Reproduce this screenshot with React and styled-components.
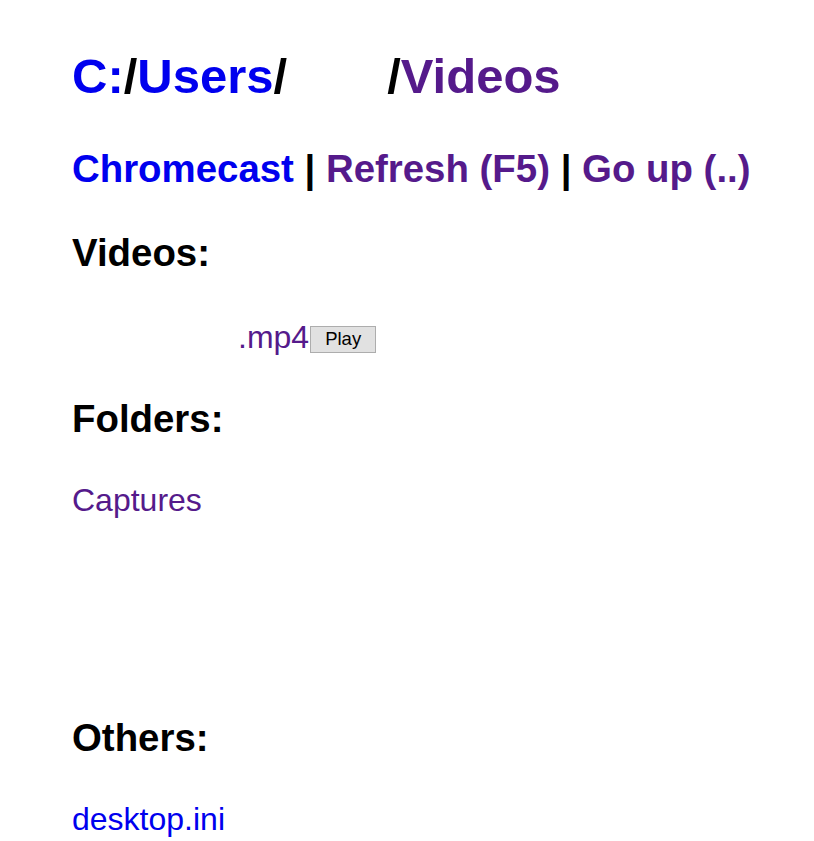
import styled, { createGlobalStyle } from "styled-components";

const GlobalStyle = createGlobalStyle`
  html, body {
    margin: 0;
    padding: 0;
    background: #ffffff;
  }
  body {
    font-family: "Liberation Sans", Arial, sans-serif;
    color: #000000;
  }
`;

const LINK = "#0000ee";
const VISITED = "#551a8b";

const Page = styled.main`
  display: flex;
  flex-direction: column;
  padding: 49px 0 0 72px;
  font-size: 32px;
  line-height: 36px;
`;

const Title = styled.h1`
  margin: 0;
  font-size: 49px;
  line-height: 54px;
  font-weight: bold;
  white-space: nowrap;
`;

const Nav = styled.h2`
  margin: ${(p) => p.$top}px 0 0;
  font-size: 38.4px;
  line-height: 43px;
  font-weight: bold;
  white-space: nowrap;
`;

const Heading = styled.h2`
  margin: ${(p) => p.$top}px 0 0;
  font-size: 38.4px;
  line-height: 43px;
  font-weight: bold;
`;

const Link = styled.a`
  color: ${(p) => (p.$visited ? VISITED : LINK)};
  text-decoration: none;
  cursor: pointer;
`;

const Redacted = styled.span`
  display: inline-block;
  width: ${(p) => p.$w}px;
`;

const Row = styled.div`
  margin: ${(p) => p.$top}px 0 0;
  white-space: nowrap;
`;

const PlayButton = styled.button`
  margin-left: 1px;
  height: 27px;
  padding: 0 14px;
  font-family: "Liberation Sans", Arial, sans-serif;
  font-size: 18.5px;
  line-height: 20px;
  color: #000000;
  background: #e1e1e1;
  border: 1px solid #adadad;
  border-radius: 0;
  vertical-align: baseline;
  position: relative;
  top: -3px;
`;

const videos = [{ name: 166, ext: ".mp4" }];
const folders = [{ label: "Captures", visited: true }];
const others = [{ label: "desktop.ini", visited: false }];

export default function App() {
  return (
    <>
      <GlobalStyle />
      <Page>
        <Title>
          <Link>C:</Link>/<Link>Users</Link>/<Redacted $w={100} />/
          <Link $visited>Videos</Link>
        </Title>
        <Nav $top={44}>
          <Link>Chromecast</Link> | <Link $visited>Refresh (F5)</Link> |{" "}
          <Link $visited>Go up (..)</Link>
        </Nav>

        <Heading $top={41}>Videos:</Heading>
        {videos.map((v, i) => (
          <Row key={i} $top={45}>
            <Link $visited>
              <Redacted $w={v.name} />
              {v.ext}
            </Link>
            <PlayButton type="button">Play</PlayButton>
          </Row>
        ))}

        <Heading $top={41}>Folders:</Heading>
        {folders.map((f) => (
          <Row key={f.label} $top={42}>
            <Link $visited={f.visited}>{f.label}</Link>
          </Row>
        ))}

        <Heading $top={198}>Others:</Heading>
        {others.map((f) => (
          <Row key={f.label} $top={42}>
            <Link $visited={f.visited}>{f.label}</Link>
          </Row>
        ))}
      </Page>
    </>
  );
}
